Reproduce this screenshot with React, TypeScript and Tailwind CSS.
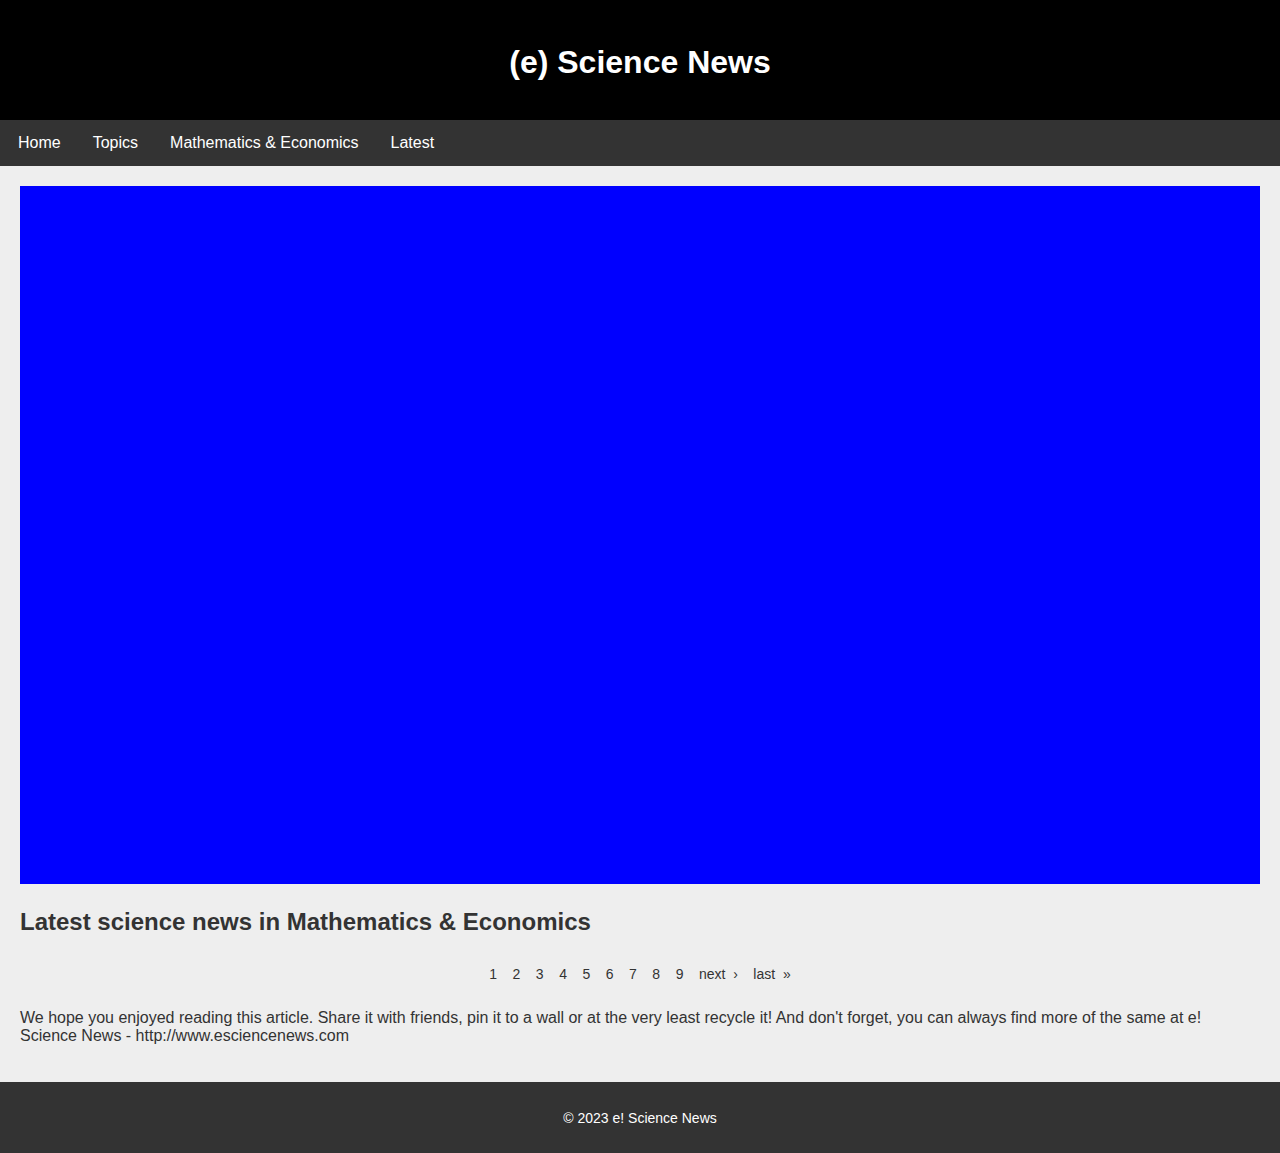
import React from "react";

const pages = ["1", "2", "3", "4", "5", "6", "7", "8", "9"];
const navLinks = ["Home", "Topics", "Mathematics & Economics", "Latest"];

export default function App() {
  return (
    <div className="min-h-screen bg-[#eeeeee] font-['Liberation_Sans',Arial,sans-serif] text-[#333333]">
      <header className="flex h-[120px] items-center justify-center bg-black">
        <h1 className="mt-1 text-[32px] font-bold leading-none text-white">(e) Science News</h1>
      </header>

      <nav className="flex h-[46px] items-center bg-[#333333] px-[2px]">
        {navLinks.map((link) => (
          <a key={link} href="#" className="px-4 text-base leading-none text-white">
            {link}
          </a>
        ))}
      </nav>

      <main className="p-5">
        <div className="h-[698px] w-full bg-[#0000ff]" />

        <h2 className="mt-[26px] text-[24px] font-bold leading-[24px]">
          Latest science news in Mathematics &amp; Economics
        </h2>

        <div className="mt-[33px] flex items-center justify-center gap-[15.5px] text-[14px] leading-none">
          {pages.map((page) => (
            <a key={page} href="#" className="text-[#333333]">
              {page}
            </a>
          ))}
          <a href="#" className="text-[#333333]">next{"\u00a0\u00a0"}›</a>
          <a href="#" className="text-[#333333]">last{"\u00a0\u00a0"}»</a>
        </div>

        <p className="mb-[17px] mt-[28px] max-w-[1182px] text-base leading-[18px]">
          We hope you enjoyed reading this article. Share it with friends, pin it to a wall or at the very least recycle it! And don't forget, you can always find more of the same at e! Science News - http://www.esciencenews.com
        </p>
      </main>

      <footer className="flex h-[71px] items-center justify-center bg-[#333333]">
        <p className="text-sm text-white">© 2023 e! Science News</p>
      </footer>
    </div>
  );
}
